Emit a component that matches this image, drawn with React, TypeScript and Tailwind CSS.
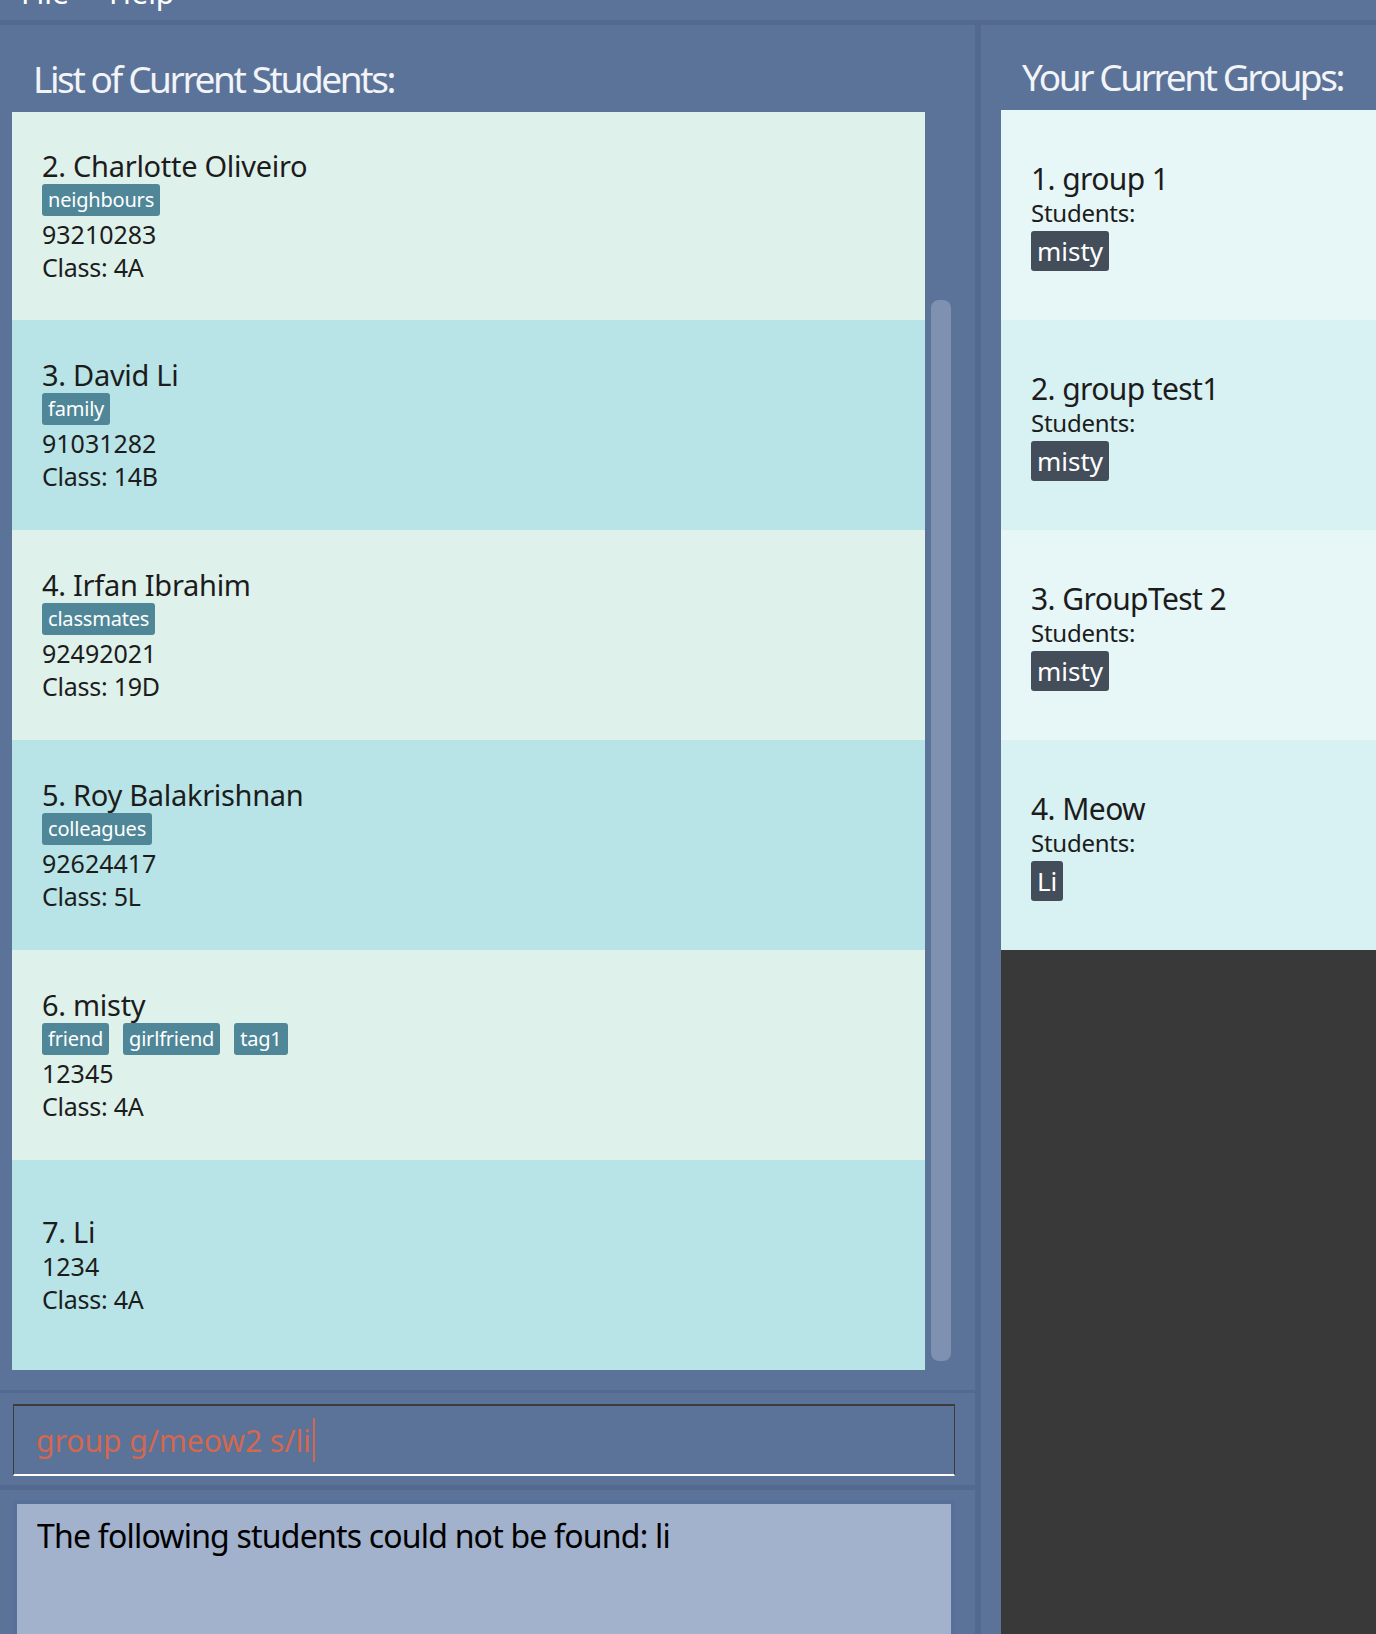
const students = [
  { no: 2, name: "Charlotte Oliveiro", tags: ["neighbours"], phone: "93210283", cls: "4A" },
  { no: 3, name: "David Li", tags: ["family"], phone: "91031282", cls: "14B" },
  { no: 4, name: "Irfan Ibrahim", tags: ["classmates"], phone: "92492021", cls: "19D" },
  { no: 5, name: "Roy Balakrishnan", tags: ["colleagues"], phone: "92624417", cls: "5L" },
  { no: 6, name: "misty", tags: ["friend", "girlfriend", "tag1"], phone: "12345", cls: "4A" },
  { no: 7, name: "Li", tags: [], phone: "1234", cls: "4A" },
];

const groups = [
  { no: 1, name: "group 1", members: ["misty"] },
  { no: 2, name: "group test1", members: ["misty"] },
  { no: 3, name: "GroupTest 2", members: ["misty"] },
  { no: 4, name: "Meow", members: ["Li"] },
];

const StudentCard = ({ s, i }: { s: (typeof students)[number]; i: number }) => (
  <div
    className={`flex flex-col justify-center pl-[30px] ${i === 0 ? "h-[208px]" : "h-[210px]"} ${
      i % 2 === 0 ? "bg-[#dff1eb]" : "bg-[#b8e4e7]"
    }`}
  >
    <div className="text-[29px] leading-[34px] text-[#1c1c1c] tracking-[-0.01em]">
      {s.no}. {s.name}
    </div>
    {s.tags.length > 0 && (
      <div className="flex gap-[14px] my-[1px]">
        {s.tags.map((t) => (
          <span key={t} className="bg-[#4f8798] text-white text-[20px] leading-[32px] px-[6px] rounded-[3px] tracking-[-0.01em]">
            {t}
          </span>
        ))}
      </div>
    )}
    <div className="text-[25px] leading-[34px] text-[#1c1c1c]">{s.phone}</div>
    <div className="text-[25px] leading-[32px] text-[#1c1c1c] tracking-[-0.01em]">Class: {s.cls}</div>
  </div>
);

const GroupCard = ({ g, i }: { g: (typeof groups)[number]; i: number }) => (
  <div
    className={`flex flex-col justify-center pl-[30px] h-[210px] ${
      i % 2 === 0 ? "bg-[#e7f6f6]" : "bg-[#d8f1f2]"
    }`}
  >
    <div className="text-[30px] leading-[36px] text-[#1c1c1c] tracking-[-0.02em] mt-[2px]">
      {g.no}. {g.name}
    </div>
    <div className="text-[24px] leading-[32px] text-[#1c1c1c] tracking-[-0.01em]">Students:</div>
    <div className="flex gap-2 mt-[2px]">
      {g.members.map((m) => (
        <span key={m} className="bg-[#434e5a] text-white text-[26px] leading-[40px] px-[6px] rounded-[3px]">
          {m}
        </span>
      ))}
    </div>
  </div>
);

export default function App() {
  return (
    <div className="w-[1376px] h-[1634px] overflow-hidden bg-[#5b7399] flex flex-col font-['Noto_Sans',sans-serif]">
      {/* menu bar */}
      <div className="h-[20px] overflow-hidden flex gap-[40px] pl-[21px] text-white text-[30px] leading-[30px]">
        <span className="-mt-[22px]">File</span>
        <span className="-mt-[22px]">Help</span>
      </div>
      <div className="h-[5px] bg-[#53698f]" />

      <div className="flex flex-1 min-h-0">
        {/* left column */}
        <div className="w-[975px] flex flex-col">
          <div className="flex flex-col h-[1365px] pt-[1px]">
            <div className="h-[86px] flex items-center pl-[33px] pt-[20px] text-[#f2f4f8] text-[37px] tracking-[-0.065em]">
              List of Current Students:
            </div>
            <div className="flex pl-[12px]">
              <div className="w-[913px] flex flex-col">
                {students.map((s, i) => (
                  <StudentCard key={s.no} s={s} i={i} />
                ))}
              </div>
              <div className="pl-[6px] pt-[188px]">
                <div className="w-[20px] h-[1061px] bg-[#7f91b1] rounded-[8px]" />
              </div>
            </div>
          </div>
          <div className="h-[3px] bg-[#53698f]" />
          <div className="h-[92px] pt-[11px] px-[13px] pr-[20px]">
            <div className="h-[72px] border-t-2 border-x border-[#3c3c3c] border-b-2 border-b-white flex items-center pl-[22px]">
              <span className="text-[#d3674f] text-[30px]">group g/meow2 s/li</span>
              <span className="w-[2px] h-[44px] bg-[#d3674f] ml-[2px]" />
            </div>
          </div>
          <div className="h-[5px] bg-[#53698f]" />
          <div className="flex-1 pt-[10px] px-[13px] pr-[20px]">
            <div className="h-full border-[4px] border-b-0 border-[#56709a] bg-[#a2b1cc] pl-[20px] pt-[8px] text-black text-[32px] tracking-[-0.025em]">
              The following students could not be found: li
            </div>
          </div>
        </div>

        {/* divider */}
        <div className="w-[6px] bg-[#53698f]" />

        {/* right column */}
        <div className="flex-1 flex flex-col pl-[20px]">
          <div className="h-[85px] flex items-center pl-[21px] pt-[18px] text-[#f2f4f8] text-[37px] tracking-[-0.065em]">
            Your Current Groups:
          </div>
          <div className="flex flex-col">
            {groups.map((g, i) => (
              <GroupCard key={g.no} g={g} i={i} />
            ))}
          </div>
          <div className="flex-1 bg-[#393939]" />
        </div>
      </div>
    </div>
  );
}
